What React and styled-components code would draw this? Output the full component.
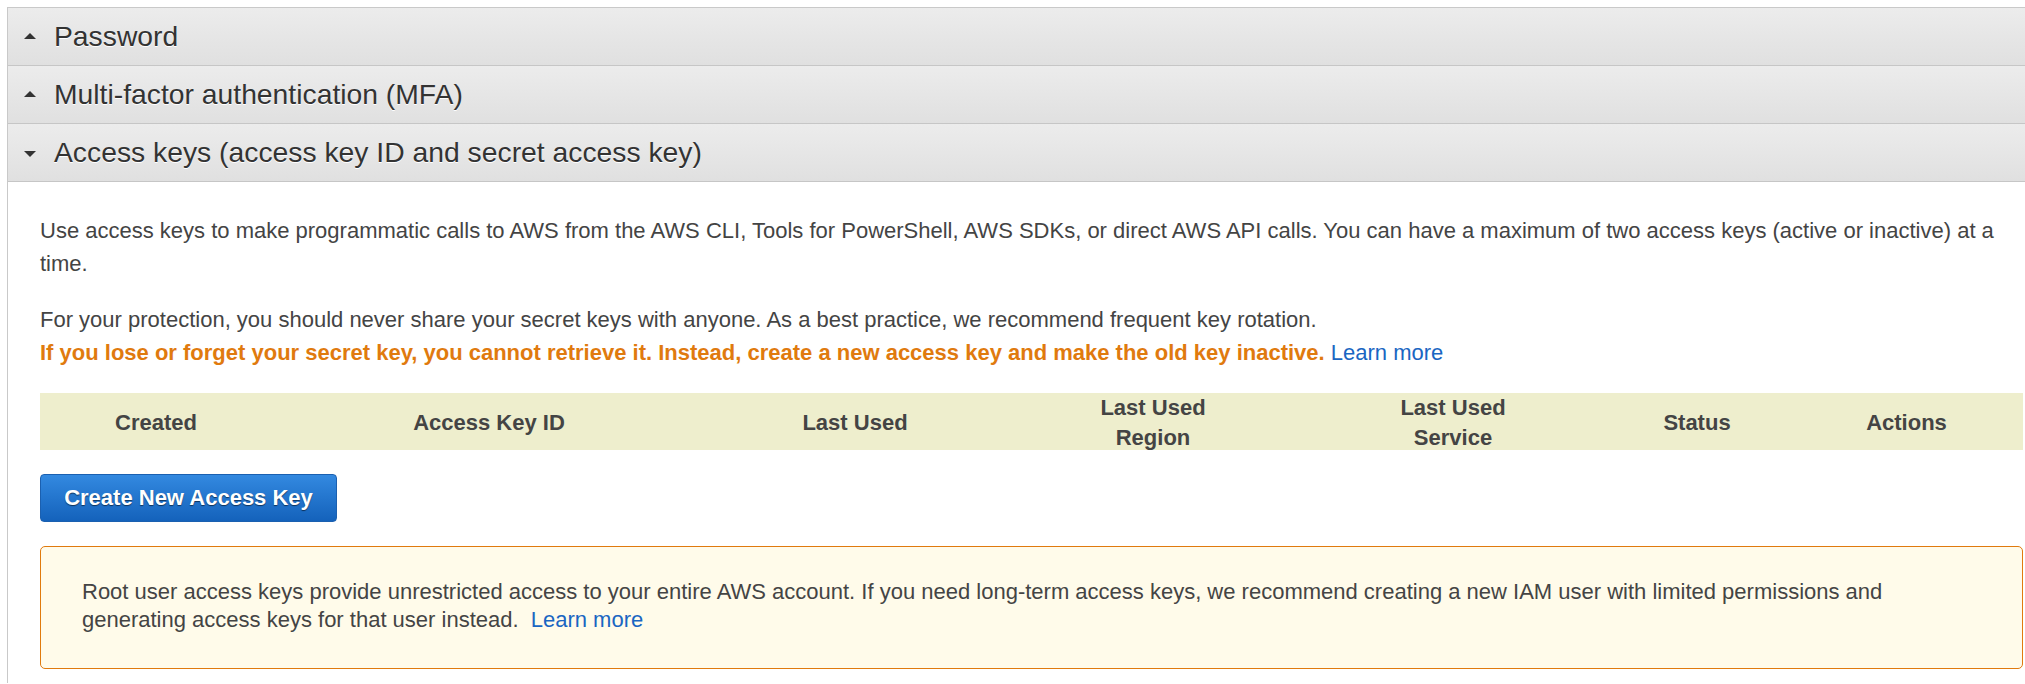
import React from "react";
import styled, { createGlobalStyle } from "styled-components";

const Global = createGlobalStyle`
  html, body {
    margin: 0;
    padding: 0;
    background: #fff;
    overflow: hidden;
  }
  body {
    font-family: "Liberation Sans", Arial, sans-serif;
    color: #444;
  }
`;

const Page = styled.div`
  padding: 7px 0 0 7px;
`;

const Panel = styled.div`
  width: 2049px;
  border: 1px solid #c9c9c9;
  border-bottom: none;
  box-sizing: border-box;
`;

const SectionHeader = styled.div`
  display: flex;
  align-items: center;
  height: 57px;
  padding-left: 16px;
  border-bottom: 1px solid #c6c6c6;
  background: linear-gradient(to bottom, #ececec, #e0e0e0);
  cursor: pointer;
`;

const Caret = styled.span`
  width: 0;
  height: 0;
  margin-right: 18px;
  border-left: 6px solid transparent;
  border-right: 6px solid transparent;
  ${(p) =>
    p.open
      ? "border-top: 6px solid #333; margin-top: 2px;"
      : "border-bottom: 6px solid #333; margin-top: -1px;"}
`;

const SectionTitle = styled.span`
  font-size: 28.3px;
  color: #333;
  text-shadow: 0 1px 0 #fff;
`;

const Body = styled.div`
  padding: 33px 32px 14px 32px;
`;

const Para = styled.p`
  margin: 0 0 24px;
  font-size: 22px;
  line-height: 32.6px;
`;

const Warning = styled.strong`
  color: #e07a0e;
  font-weight: bold;
`;

const Link = styled.a`
  color: #1a66c2;
  text-decoration: none;
  margin-left: ${(p) => (p.gap ? "6px" : "0")};
`;

const TableHead = styled.div`
  display: grid;
  grid-template-columns: 232px 434px 298px 298px 302px 186px 1fr;
  align-items: center;
  height: 57px;
  background: #eeeecd;
  margin-bottom: 24px;
`;

const Th = styled.div`
  text-align: center;
  font-size: 22px;
  font-weight: bold;
  line-height: 29.5px;
  color: #444;
`;

const PrimaryButton = styled.button`
  display: block;
  height: 48px;
  width: 297px;
  padding: 0;
  border: 1px solid #1b60b0;
  border-radius: 4px;
  background: linear-gradient(to bottom, #3389e0, #1462bb);
  color: #fff;
  font-family: inherit;
  font-size: 22px;
  font-weight: bold;
  text-shadow: 0 1px 1px rgba(0, 0, 0, 0.55);
  cursor: pointer;
  margin-bottom: 24px;
`;

const Alert = styled.div`
  box-sizing: border-box;
  height: 123px;
  padding: 31px 40px 0 41px;
  border: 1px solid #e07a0e;
  border-radius: 5px;
  background: #fffbea;
  font-size: 22px;
  line-height: 27.6px;
  color: #444;
`;

const sections = [
  { title: "Password", open: false },
  { title: "Multi-factor authentication (MFA)", open: false },
  { title: "Access keys (access key ID and secret access key)", open: true },
];

const columns = [
  ["Created"],
  ["Access Key ID"],
  ["Last Used"],
  ["Last Used", "Region"],
  ["Last Used", "Service"],
  ["Status"],
  ["Actions"],
];

export default function App() {
  return (
    <Page>
      <Global />
      <Panel>
        {sections.map((s) => (
          <SectionHeader key={s.title}>
            <Caret open={s.open} />
            <SectionTitle>{s.title}</SectionTitle>
          </SectionHeader>
        ))}
        <Body>
          <Para>
            Use access keys to make programmatic calls to AWS from the AWS CLI, Tools for
            PowerShell, AWS SDKs, or direct AWS API calls. You can have a maximum of two access
            keys (active or inactive) at a time.
          </Para>
          <Para>
            For your protection, you should never share your secret keys with anyone. As a best
            practice, we recommend frequent key rotation.
            <br />
            <Warning>
              If you lose or forget your secret key, you cannot retrieve it. Instead, create a new
              access key and make the old key inactive.
            </Warning>{" "}
            <Link href="#">Learn more</Link>
          </Para>
          <TableHead>
            {columns.map((c, i) => (
              <Th key={i}>
                {c.map((line, j) => (
                  <div key={j}>{line}</div>
                ))}
              </Th>
            ))}
          </TableHead>
          <PrimaryButton>Create New Access Key</PrimaryButton>
          <Alert>
            Root user access keys provide unrestricted access to your entire AWS account. If you
            need long-term access keys, we recommend creating a new IAM user with limited
            permissions and generating access keys for that user instead.{" "}
            <Link href="#" gap>
              Learn more
            </Link>
          </Alert>
        </Body>
      </Panel>
    </Page>
  );
}
